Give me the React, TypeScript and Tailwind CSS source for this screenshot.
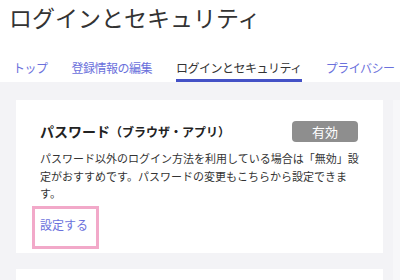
export default function App() {
  return (
    <main
      className="min-h-screen w-[400px] h-[280px] overflow-hidden bg-[#f3f3f6] text-[#333]"
      style={{ fontFamily: '"Noto Sans CJK JP", "Noto Sans", sans-serif' }}
    >
      {/* Header */}
      <header className="bg-white">
        <h1 className="pl-[9px] text-[23px] leading-[34px] font-normal text-[#333]">
          ログインとセキュリティ
        </h1>
        <nav className="mt-[26px] flex gap-6 pl-[13px] text-[12px] leading-[16px] tracking-[-0.5px] whitespace-nowrap">
          <a className="pb-[3px] border-b-[3px] border-transparent text-[#6b71dc]">トップ</a>
          <a className="pb-[3px] border-b-[3px] border-transparent text-[#6b71dc]">登録情報の編集</a>
          <a className="pb-[3px] border-b-[3px] border-[#4451c6] text-[#333]">ログインとセキュリティ</a>
          <a className="pb-[3px] border-b-[3px] border-transparent text-[#6b71dc]">プライバシー</a>
        </nav>
      </header>

      {/* Content */}
      <div className="flex pt-[18px]">
        <div className="ml-4 w-[367px] flex flex-col gap-4">
          <section className="bg-white pt-[21px] px-6 pb-1">
            <div className="flex items-center justify-between">
              <h2 className="font-bold text-[14px] leading-[21px] text-[#222]">
                パスワード<span className="text-[12px]">（ブラウザ・アプリ）</span>
              </h2>
              <span className="mr-[1px] w-[66px] h-[21px] rounded bg-[#8e8e8e] text-white text-[13px] leading-[21px] text-center">
                有効
              </span>
            </div>
            <p className="mt-2 -mr-2 text-[11px] leading-[17.5px] text-[#333]">
              パスワード以外のログイン方法を利用している場合は「無効」設<br />
              定がおすすめです。パスワードの変更もこちらから設定できま<br />
              す。
            </p>
            <div className="-ml-2 mt-[3px] w-[67px] h-[43px] border-[3px] border-[#f2a9c9] px-[5px] pb-1 flex items-center">
              <a className="text-[12px] leading-[16px] text-[#6b71dc] whitespace-nowrap">設定する</a>
            </div>
          </section>
          <section className="bg-white h-[40px]" />
        </div>
        <div className="ml-[10px] w-[7px] bg-[#f7f7f9]" />
      </div>
    </main>
  );
}
